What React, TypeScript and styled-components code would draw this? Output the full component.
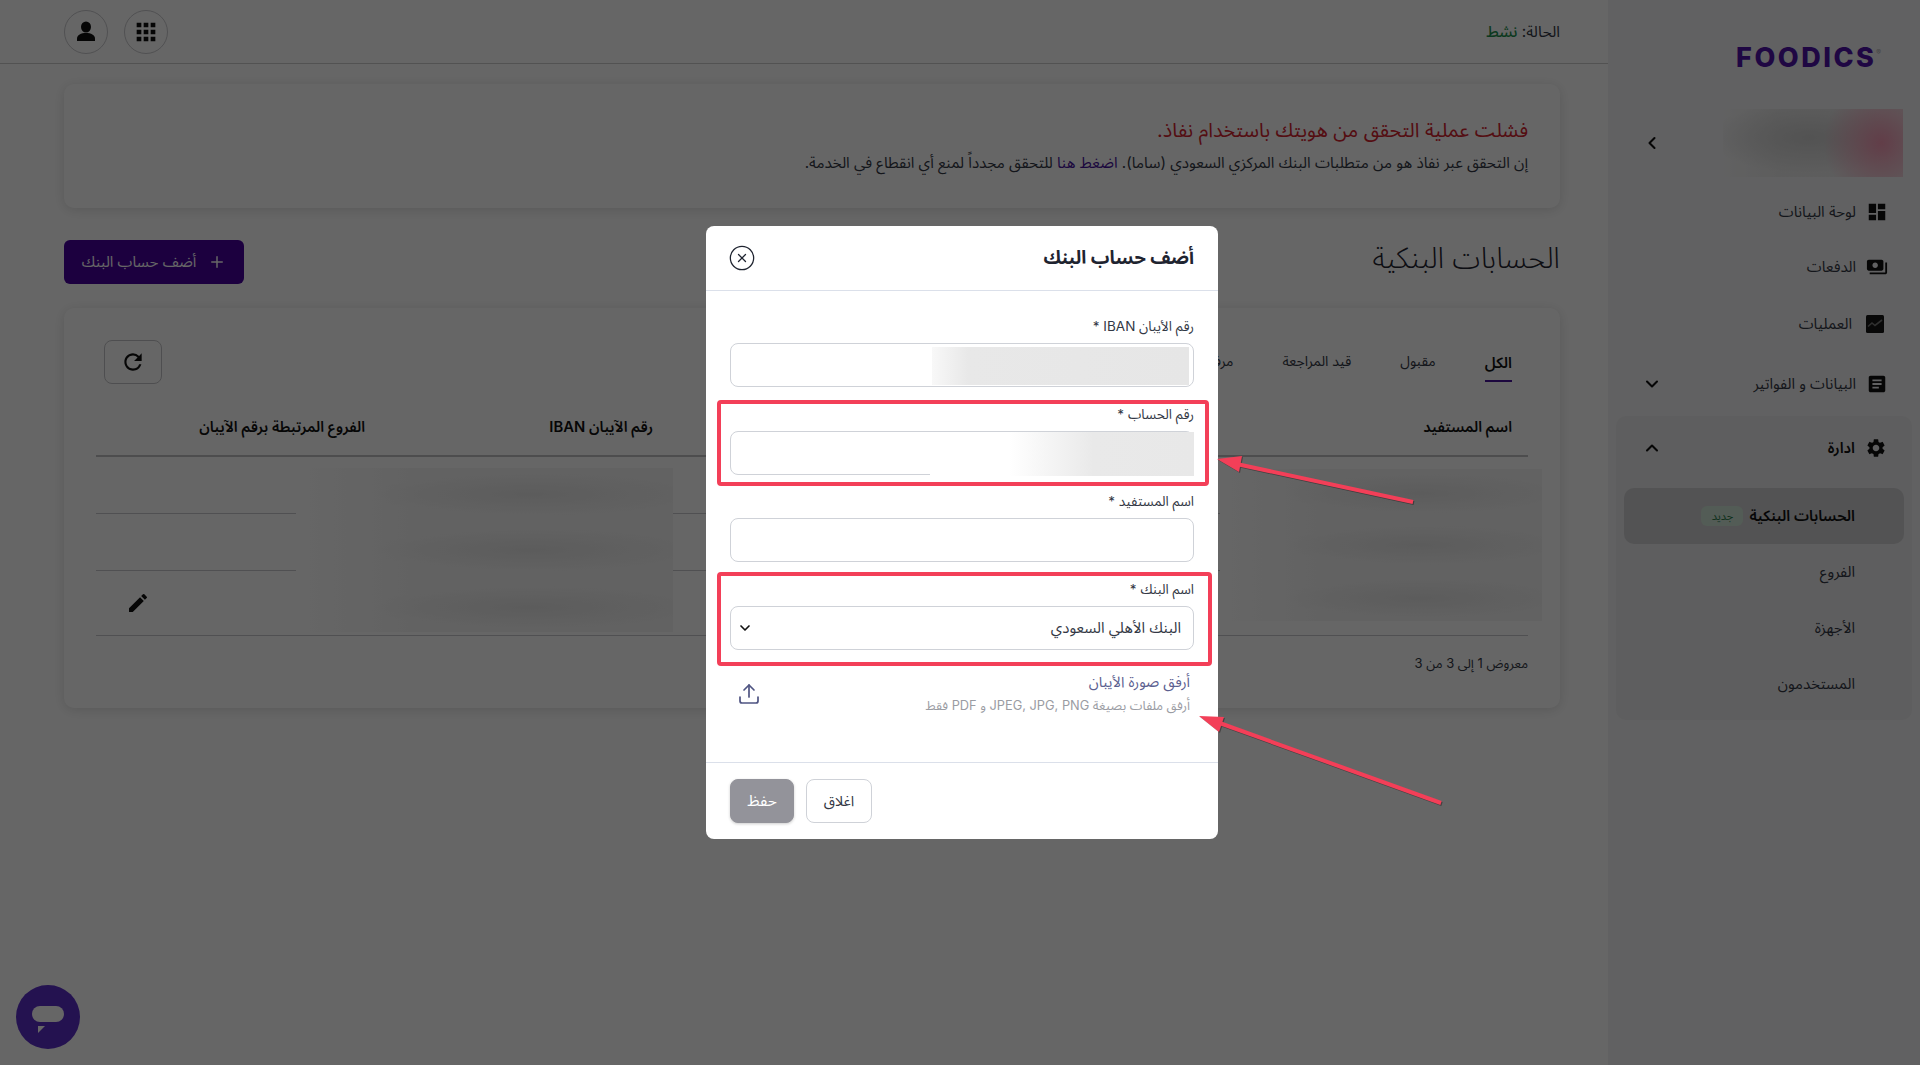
import { createGlobalStyle, styled } from 'styled-components';
import { ChevronDown, ChevronLeft, ChevronUp, CircleX, Plus, Upload } from 'lucide-react';
import { MdApps, MdArticle, MdDashboard, MdEdit, MdPayments, MdRefresh, MdSettings } from 'react-icons/md';

const GlobalStyle = createGlobalStyle`
  * { box-sizing: border-box; }
  html, body { margin: 0; height: 100%; }
  body {
    font-family: Inter, "Noto Sans", "Noto Sans Arabic", "DejaVu Sans", sans-serif;
    color: #1f2430;
    background: #fff;
    overflow: hidden;
  }
`;

const Page = styled.div`
  display: flex;
  direction: rtl;
  width: 1920px;
  height: 1065px;
  position: relative;
  overflow: hidden;
`;

/* sidebar */
const Sidebar = styled.aside`
  width: 312px;
  flex: none;
  background: #f3f3f4;
  padding: 45px 8px 0;
  display: flex;
  flex-direction: column;
`;

const LogoRow = styled.div`
  height: 20px;
  padding-right: 31px;
  display: flex;
  align-items: center;
`;

const Logo = styled.span`
  font-size: 27px;
  line-height: 20px;
  font-weight: 800;
  direction: ltr;
  letter-spacing: 2.5px;
  color: #4f12a8;
  white-space: nowrap;
  sup { font-size: 7px; font-weight: 400; letter-spacing: 0; vertical-align: 12px; color: #aaa; }
`;

const BranchRow = styled.div`
  margin-top: 44px;
  height: 68px;
  position: relative;
  display: flex;
  align-items: center;
  justify-content: flex-end;
  color: #111;
  padding-left: 26px;
`;

const BranchBlur = styled.div`
  position: absolute;
  top: 0;
  right: 9px;
  width: 180px;
  height: 68px;
  background:
    radial-gradient(ellipse 58px 60px at 88% 50%, rgba(250, 130, 165, 0.75), transparent 100%),
    radial-gradient(ellipse 100px 36px at 48% 42%, rgba(205, 205, 205, 0.95), transparent 100%),
    linear-gradient(to right, transparent, rgba(232, 232, 232, 0.9) 30%);
`;

const NavItem = styled.div`
  display: flex;
  align-items: center;
  gap: 12px;
  height: 24px;
  padding: 0 26px 0 26px;
  font-size: 15px;
  color: #333845;
  margin-top: ${(p: { $top: number }) => p.$top}px;
  svg:first-child { font-size: 22px; color: #111; flex: none; margin: 0 -2px; }
`;

const NavLabel = styled.span`
  flex: 1;
`;

const Group = styled.div`
  margin-top: 20px;
  height: 304px;
  background: #ebebed;
  border-radius: 10px;
  padding: 0 8px;
`;

const GroupHead = styled.div`
  height: 64px;
  display: flex;
  align-items: center;
  gap: 10px;
  padding: 0 17px 0 18px;
  font-size: 15px;
  font-weight: 600;
  color: #111;
  svg:first-child { font-size: 22px; flex: none; }
`;

const SubItem = styled.div<{ $active?: boolean }>`
  height: 56px;
  border-radius: 10px;
  display: flex;
  align-items: center;
  gap: 6px;
  padding-right: 49px;
  margin-top: ${(p) => (p.$active ? 8 : 0)}px;
  font-size: 15px;
  font-weight: ${(p) => (p.$active ? 600 : 400)};
  color: ${(p) => (p.$active ? '#111' : '#333845')};
  background: ${(p) => (p.$active ? '#cfcfd2' : 'transparent')};
`;

const NewBadge = styled.span`
  width: 42px;
  height: 20px;
  border-radius: 6px;
  background: #cfe6d6;
  color: #2c7a4b;
  font-size: 11px;
  font-weight: 400;
  display: flex;
  align-items: center;
  justify-content: center;
`;

/* main area */
const Main = styled.main`
  flex: 1;
  min-width: 0;
  background: #fff;
`;

const Topbar = styled.header`
  height: 64px;
  border-bottom: 1px solid #cccccc;
  padding: 0 48px 0 64px;
  display: flex;
  align-items: center;
  justify-content: space-between;
`;

const StatusText = styled.div`
  font-size: 15.5px;
  color: #333845;
  b { color: #1f8f4e; font-weight: 500; }
`;

const TopActions = styled.div`
  display: flex;
  flex-direction: row-reverse;
  gap: 16px;
`;

const RoundButton = styled.button`
  width: 44px;
  height: 44px;
  border-radius: 50%;
  border: 1px solid #c9c9cd;
  background: transparent;
  padding: 0;
  display: flex;
  align-items: center;
  justify-content: center;
  color: #111;
`;

const Content = styled.div`
  padding: 20px 48px 0 64px;
`;

const Card = styled.section`
  background: #fff;
  border-radius: 10px;
  box-shadow: 0 2px 12px rgba(0, 0, 0, 0.13);
`;

const AlertCard = styled(Card)`
  height: 124px;
  padding: 32px 32px 0;
`;

const AlertTitle = styled.div`
  font-size: 19.8px;
  line-height: 28px;
  color: #d2232f;
`;

const AlertBody = styled.div`
  margin-top: 8px;
  font-size: 15.2px;
  line-height: 22px;
  color: #333845;
  a { color: #46129b; text-decoration: none; }
`;

const TitleRow = styled.div`
  height: 44px;
  margin-top: 32px;
  display: flex;
  align-items: center;
  justify-content: space-between;
`;

const PageTitle = styled.h1`
  margin: 0;
  padding-bottom: 8px;
  font-size: 29px;
  font-weight: 300;
  color: #1f2430;
`;

const AddButton = styled.button`
  height: 44px;
  width: 180px;
  border: 0;
  border-radius: 6px;
  background: #46009f;
  color: #fff;
  font: inherit;
  font-size: 15px;
  display: flex;
  align-items: center;
  justify-content: center;
  gap: 12px;
`;

const TableCard = styled(Card)`
  height: 400px;
  margin-top: 24px;
  padding: 32px 32px 0;
  position: relative;
`;

const TabRow = styled.div`
  height: 44px;
  display: flex;
  align-items: flex-start;
  justify-content: space-between;
  padding-right: 16px;
`;

const Tabs = styled.div`
  display: flex;
  gap: 49px;
`;

const Tab = styled.div<{ $active?: boolean }>`
  height: 42px;
  padding-top: 7px;
  font-size: ${(p) => (p.$active ? 15 : 14)}px;
  color: ${(p) => (p.$active ? '#111' : '#333845')};
  font-weight: ${(p) => (p.$active ? 600 : 400)};
  border-bottom: 2px solid ${(p) => (p.$active ? '#46129b' : 'transparent')};
`;

const RefreshButton = styled.button`
  width: 58px;
  height: 44px;
  margin-left: 8px;
  border: 1px solid #c4c4c8;
  border-radius: 8px;
  background: transparent;
  display: flex;
  align-items: center;
  justify-content: center;
  color: #111;
`;

const Row = styled.div<{ $height: number; $head?: boolean }>`
  display: grid;
  grid-template-columns: 859px 288px 285px;
  align-items: center;
  height: ${(p) => p.$height}px;
  border-bottom: ${(p) => (p.$head ? '2px solid #c0c0c4' : '1px solid #c9c9cd')};
  padding-top: ${(p) => (p.$head ? 16 : 0)}px;
`;

const HeadCell = styled.div`
  padding-right: 16px;
  font-size: 14.8px;
  font-weight: 600;
  color: #111;
`;

const EditCell = styled.div`
  grid-column: 3;
  display: flex;
  justify-content: flex-end;
  padding-left: 30px;
  color: #111;
`;

const FooterNote = styled.div`
  margin-top: 14px;
  font-size: 13px;
  color: #333845;
`;

const TableBlur = styled.div<{ $left: number; $width: number; $top: number; $height: number }>`
  position: absolute;
  left: ${(p) => p.$left}px;
  width: ${(p) => p.$width}px;
  top: ${(p) => p.$top}px;
  height: ${(p) => p.$height}px;
  background:
    radial-gradient(ellipse 42% 13% at 62% 16%, #e6e6e6, transparent 100%),
    radial-gradient(ellipse 42% 13% at 62% 50%, #e6e6e6, transparent 100%),
    radial-gradient(ellipse 42% 13% at 62% 85%, #e6e6e6, transparent 100%),
    linear-gradient(to right, #fff, #f6f6f6 30%, #f4f4f4);
`;

/* modal */
const Overlay = styled.div`
  position: absolute;
  inset: 0;
  background: rgba(0, 0, 0, 0.6);
  display: flex;
  align-items: center;
  justify-content: center;
  padding-left: 4px;
`;

const Modal = styled.div`
  width: 512px;
  height: 613px;
  background: #fff;
  border-radius: 8px;
  display: flex;
  flex-direction: column;
`;

const ModalHead = styled.div`
  height: 65px;
  flex: none;
  border-bottom: 1px solid #dbe0ea;
  display: flex;
  align-items: center;
  justify-content: space-between;
  padding: 0 24px;
`;

const ModalTitle = styled.h2`
  margin: 0;
  font-size: 18.5px;
  font-weight: 700;
  color: #1f2430;
`;

const CloseIcon = styled(CircleX)`
  margin-left: -2px;
`;

const ModalBody = styled.div`
  flex: 1;
  padding: 26px 24px 0;
  display: flex;
  flex-direction: column;
  gap: 17.6px;
`;

const Field = styled.div`
  position: relative;
`;

const Label = styled.label`
  display: block;
  height: 18px;
  line-height: 18px;
  margin-bottom: 8px;
  font-size: 13.5px;
  color: #333845;
`;

const Input = styled.div`
  position: relative;
  height: 44px;
  border: 1px solid #cfd2d8;
  border-radius: 8px;
  background: #fff;
  display: flex;
  align-items: center;
  justify-content: space-between;
  padding: 0 12px 0 6px;
  font-size: 15px;
  color: #333845;
`;

const MaskedValue = styled.div<{ $soft?: boolean }>`
  position: absolute;
  left: ${(p) => (p.$soft ? 199 : 201)}px;
  right: ${(p) => (p.$soft ? -1 : 4)}px;
  top: ${(p) => (p.$soft ? 0 : 3)}px;
  bottom: ${(p) => (p.$soft ? -2 : 1)}px;
  background: ${(p) =>
    p.$soft
      ? 'linear-gradient(to right, #fff 30%, #e9e9e9 62%, #e8e8e8)'
      : 'linear-gradient(to right, #f8f8f8, #e8e8e8 14%, #e6e6e6)'};
`;

const Highlight = styled.div<{ $top: number; $right: number; $bottom: number }>`
  position: absolute;
  top: ${(p) => p.$top}px;
  right: ${(p) => p.$right}px;
  bottom: ${(p) => p.$bottom}px;
  left: -13px;
  border: 4px solid #f33f58;
  border-radius: 4px;
  pointer-events: none;
`;

const UploadRow = styled.div`
  margin-top: 3px;
  padding: 0 4px 0 7px;
  display: flex;
  align-items: center;
  justify-content: space-between;
  color: #4f5482;
  svg { margin-top: 3px; }
`;

const UploadTitle = styled.div`
  font-size: 14.6px;
  line-height: 24px;
  color: #5c6090;
`;

const UploadHint = styled.div`
  margin-top: 3px;
  font-size: 12.8px;
  line-height: 18px;
  color: #9a9ca3;
`;

const ModalFoot = styled.div`
  height: 77px;
  flex: none;
  border-top: 1px solid #dbe0ea;
  padding: 16px 24px;
  display: flex;
  justify-content: flex-end;
  gap: 12px;
`;

const FootButton = styled.button<{ $primary?: boolean }>`
  height: 44px;
  width: ${(p) => (p.$primary ? 64 : 66)}px;
  border-radius: 8px;
  font: inherit;
  font-size: ${(p) => (p.$primary ? 15.5 : 14.5)}px;
  border: 1px solid ${(p) => (p.$primary ? '#93939a' : '#cfd2d8')};
  background: ${(p) => (p.$primary ? '#93939a' : '#fff')};
  color: ${(p) => (p.$primary ? '#fff' : '#333845')};
  box-shadow: ${(p) => (p.$primary ? '0 1px 3px rgba(0,0,0,.2)' : 'none')};
`;

const ArrowLayer = styled.svg`
  position: absolute;
  left: 0;
  top: 0;
  pointer-events: none;
  filter: drop-shadow(1px 1px 0 rgba(0, 0, 0, 0.35));
`;

const ChatBubble = styled.div`
  position: absolute;
  left: 16px;
  bottom: 16px;
  width: 64px;
  height: 64px;
  border-radius: 50%;
  background: #5a2dc8;
  display: flex;
  align-items: center;
  justify-content: center;
`;

const UserIcon = () => (
  <svg width="24" height="24" viewBox="0 0 24 24" fill="currentColor">
    <ellipse cx="12" cy="7" rx="5" ry="5.6" />
    <path d="M3 21v-2.5C3 15 7 13 12 13s9 2 9 5.5V21z" />
  </svg>
);

const ChartIcon = () => (
  <svg width="18" height="18" viewBox="0 0 18 18" style={{ margin: '0 2px', flex: 'none' }}>
    <rect width="18" height="18" rx="1.5" fill="#141414" />
    <path d="M2 11.5 6 8l3 2.5L16 5" fill="none" stroke="#777" strokeWidth="1.6" />
  </svg>
);

const ChatIcon = () => (
  <svg width="32" height="34" viewBox="0 0 32 34">
    <rect x="0" y="6" width="32" height="16" rx="8" fill="#fff" />
    <path d="M6 26h7l-7 7z" fill="#fff" />
  </svg>
);

const App = () => {
  return (
    <Page>
      <GlobalStyle />
      <Sidebar>
        <LogoRow>
          <Logo>
            FOODICS<sup>®</sup>
          </Logo>
        </LogoRow>
        <BranchRow>
          <BranchBlur />
          <ChevronLeft size={20} strokeWidth={2.5} />
        </BranchRow>
        <NavItem $top={23}>
          <MdDashboard />
          <NavLabel>لوحة البيانات</NavLabel>
        </NavItem>
        <NavItem $top={31}>
          <MdPayments />
          <NavLabel>الدفعات</NavLabel>
        </NavItem>
        <NavItem $top={33}>
          <ChartIcon />
          <NavLabel>العمليات</NavLabel>
        </NavItem>
        <NavItem $top={36}>
          <MdArticle />
          <NavLabel>البيانات و الفواتير</NavLabel>
          <ChevronDown size={20} strokeWidth={2.5} color="#111" />
        </NavItem>
        <Group>
          <GroupHead>
            <MdSettings />
            <NavLabel>ادارة</NavLabel>
            <ChevronUp size={20} strokeWidth={2.5} />
          </GroupHead>
          <SubItem $active>
            الحسابات البنكية
            <NewBadge>جديد</NewBadge>
          </SubItem>
          <SubItem>الفروع</SubItem>
          <SubItem>الأجهزة</SubItem>
          <SubItem>المستخدمون</SubItem>
        </Group>
      </Sidebar>

      <Main>
        <Topbar>
          <StatusText>
            الحالة: <b>نشط</b>
          </StatusText>
          <TopActions>
            <RoundButton>
              <UserIcon />
            </RoundButton>
            <RoundButton>
              <MdApps size={28} />
            </RoundButton>
          </TopActions>
        </Topbar>

        <Content>
          <AlertCard>
            <AlertTitle>فشلت عملية التحقق من هويتك باستخدام نفاذ.</AlertTitle>
            <AlertBody>
              إن التحقق عبر نفاذ هو من متطلبات البنك المركزي السعودي (ساما). <a href="#retry">اضغط هنا</a> للتحقق مجدداً
              لمنع أي انقطاع في الخدمة.
            </AlertBody>
          </AlertCard>

          <TitleRow>
            <PageTitle>الحسابات البنكية</PageTitle>
            <AddButton>
              <Plus size={18} />
              أضف حساب البنك
            </AddButton>
          </TitleRow>

          <TableCard>
            <TabRow>
              <Tabs>
                <Tab $active>الكل</Tab>
                <Tab>مقبول</Tab>
                <Tab>قيد المراجعة</Tab>
                <Tab>مرفوض</Tab>
              </Tabs>
              <RefreshButton>
                <MdRefresh size={26} />
              </RefreshButton>
            </TabRow>
            <Row $head $height={73}>
              <HeadCell>اسم المستفيد</HeadCell>
              <HeadCell>رقم الآيبان IBAN</HeadCell>
              <HeadCell>الفروع المرتبطة برقم الآيبان</HeadCell>
            </Row>
            <Row $height={57} />
            <Row $height={57} />
            <Row $height={65}>
              <EditCell>
                <MdEdit size={24} />
              </EditCell>
            </Row>
            <FooterNote>معروض 1 إلى 3 من 3</FooterNote>
            <TableBlur $left={232} $width={377} $top={160} $height={164} />
            <TableBlur $left={1156} $width={322} $top={161} $height={152} />
          </TableCard>
        </Content>
      </Main>

      <ChatBubble>
        <ChatIcon />
      </ChatBubble>

      <Overlay>
        <Modal>
          <ModalHead>
            <ModalTitle>أضف حساب البنك</ModalTitle>
            <CloseIcon size={28} strokeWidth={1.1} color="#1f2430" />
          </ModalHead>
          <ModalBody>
            <Field>
              <Label>رقم الأيبان IBAN *</Label>
              <Input>
                <MaskedValue />
              </Input>
            </Field>
            <Field>
              <Label>رقم الحساب *</Label>
              <Input>
                <MaskedValue $soft />
              </Input>
              <Highlight $top={-5} $right={-15} $bottom={-11} />
            </Field>
            <Field>
              <Label>اسم المستفيد *</Label>
              <Input />
            </Field>
            <Field>
              <Label>اسم البنك *</Label>
              <Input>
                البنك الأهلي السعودي
                <ChevronDown size={16} strokeWidth={2.5} color="#111" />
              </Input>
              <Highlight $top={-8} $right={-18} $bottom={-16} />
            </Field>
            <UploadRow>
              <div>
                <UploadTitle>أرفق صورة الأيبان</UploadTitle>
                <UploadHint>أرفق ملفات بصيغة JPEG, JPG, PNG و PDF فقط</UploadHint>
              </div>
              <Upload size={24} strokeWidth={1.7} />
            </UploadRow>
          </ModalBody>
          <ModalFoot>
            <FootButton>اغلاق</FootButton>
            <FootButton $primary>حفظ</FootButton>
          </ModalFoot>
        </Modal>
      </Overlay>

      <ArrowLayer width="1920" height="1065" viewBox="0 0 1920 1065">
        <g fill="#f33f58" stroke="none">
          <path d="M1413 502 1232 463" stroke="#f33f58" strokeWidth="4" fill="none" />
          <polygon points="1217,459 1239,472 1242,456" />
          <path d="M1441 803 1214 721" stroke="#f33f58" strokeWidth="4" fill="none" />
          <polygon points="1199,716 1219,732 1224,717" />
        </g>
      </ArrowLayer>
    </Page>
  );
};

export default App;
